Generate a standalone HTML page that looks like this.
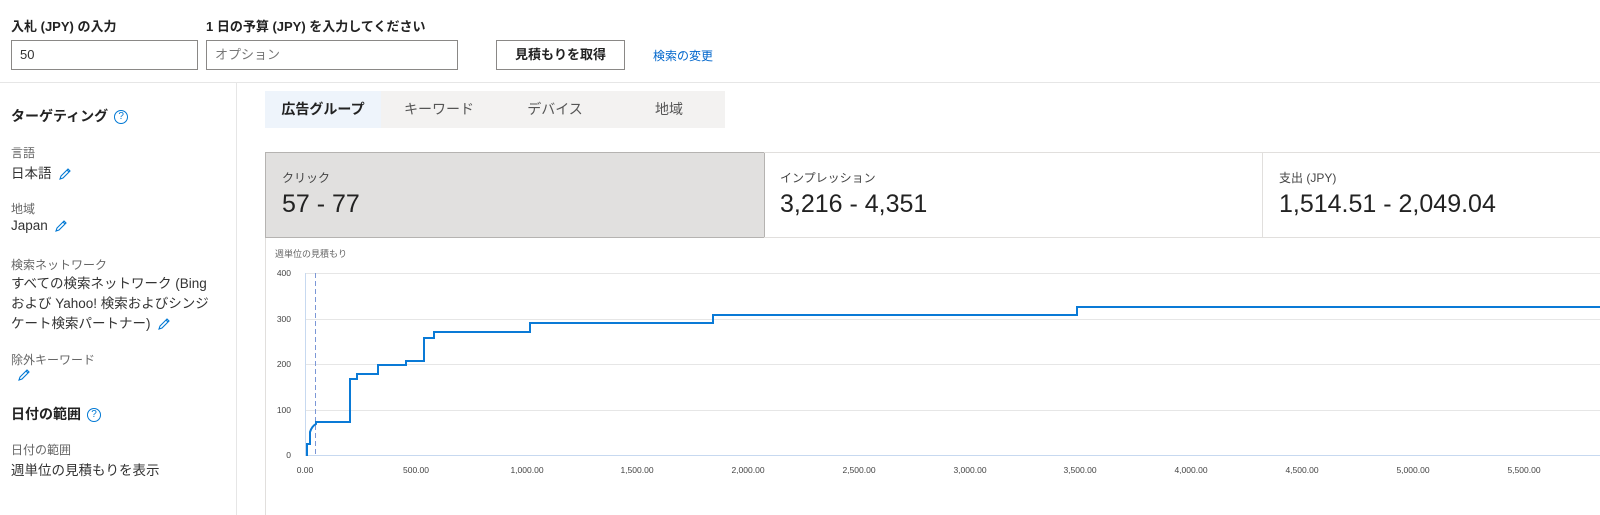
<!DOCTYPE html>
<html><head><meta charset="utf-8"><style>
*{margin:0;padding:0;box-sizing:border-box}
body{width:1600px;height:515px;overflow:hidden;background:#fff;font-family:"Liberation Sans","Noto Sans CJK JP",sans-serif;color:#222;position:relative}
.a{position:absolute;white-space:nowrap}
.lbl{font-size:13px;font-weight:bold;color:#222}
.inp{border:1px solid #8a8886;height:30px;font-size:13px;color:#333;padding:0 8px;line-height:28px;background:#fff}
.sm{font-size:12px;color:#666}
.val{font-size:13.5px;color:#333}
.pen{display:inline-block;vertical-align:middle;margin-left:6px}
.q{display:inline-block;width:14px;height:14px;border:1px solid #0078d4;border-radius:50%;color:#0078d4;font-size:10px;line-height:12px;text-align:center;vertical-align:middle;margin-left:6px;font-weight:normal}
.tab{position:absolute;top:91px;height:37px;background:#f3f2f1;font-size:14px;color:#555;text-align:center;line-height:37px}
.card{position:absolute;top:152px;height:86px;border:1px solid #e1dfdd;padding:16px 16px}
.card .t{font-size:12px;color:#444}
.card .n{font-size:25px;color:#222;margin-top:4px}
</style></head><body>
<div class="a lbl" style="left:11px;top:16px">入札 (JPY) の入力</div>
<div class="a lbl" style="left:206px;top:16px">1 日の予算 (JPY) を入力してください</div>
<div class="a inp" style="left:11px;top:40px;width:187px">50</div>
<div class="a inp" style="left:206px;top:40px;width:252px;color:#777">オプション</div>
<div class="a" style="left:496px;top:40px;width:129px;height:30px;border:1px solid #8a8886;font-size:13px;font-weight:bold;text-align:center;line-height:28px">見積もりを取得</div>
<div class="a" style="left:653px;top:47px;font-size:12px;color:#0066cc">検索の変更</div>
<div class="a" style="left:0;top:82px;width:1600px;height:1px;background:#e6e6e6"></div>
<div class="a" style="left:236px;top:83px;width:1px;height:432px;background:#e6e6e6"></div>

<div class="a" style="left:11px;top:106px;font-size:14px;font-weight:bold;color:#222">ターゲティング<span class="q">?</span></div>
<div class="a sm" style="left:11px;top:144px">言語</div>
<div class="a val" style="left:11px;top:162px">日本語<svg class="pen" width="14" height="14" viewBox="0 0 14 14"><path d="M2 12 L3 9 L10 2 L12 4 L5 11 Z M9 3 L11 5" fill="none" stroke="#0078d4" stroke-width="1.1"/></svg></div>
<div class="a sm" style="left:11px;top:200px">地域</div>
<div class="a val" style="left:11px;top:218px">Japan<svg class="pen" width="14" height="14" viewBox="0 0 14 14"><path d="M2 12 L3 9 L10 2 L12 4 L5 11 Z M9 3 L11 5" fill="none" stroke="#0078d4" stroke-width="1.1"/></svg></div>
<div class="a sm" style="left:11px;top:256px">検索ネットワーク</div>
<div class="a val" style="left:11px;top:274px;line-height:20px">すべての検索ネットワーク (Bing<br>および Yahoo! 検索およびシンジ<br>ケート検索パートナー)<svg class="pen" width="14" height="14" viewBox="0 0 14 14"><path d="M2 12 L3 9 L10 2 L12 4 L5 11 Z M9 3 L11 5" fill="none" stroke="#0078d4" stroke-width="1.1"/></svg></div>
<div class="a sm" style="left:11px;top:351px">除外キーワード</div>
<svg class="a" style="left:17px;top:368px" width="14" height="14" viewBox="0 0 14 14"><path d="M2 12 L3 9 L10 2 L12 4 L5 11 Z M9 3 L11 5" fill="none" stroke="#0078d4" stroke-width="1.1"/></svg>
<div class="a" style="left:11px;top:404px;font-size:14px;font-weight:bold">日付の範囲<span class="q">?</span></div>
<div class="a sm" style="left:11px;top:441px">日付の範囲</div>
<div class="a val" style="left:11px;top:459px">週単位の見積もりを表示</div>

<div class="tab" style="left:265px;width:116px;background:#eef4fb;color:#222;font-weight:bold">広告グループ</div>
<div class="tab" style="left:381px;width:116px">キーワード</div>
<div class="tab" style="left:497px;width:116px">デバイス</div>
<div class="tab" style="left:613px;width:112px">地域</div>

<div class="a" style="left:265px;top:152px;width:1px;height:363px;background:#e1dfdd"></div>
<div class="card" style="left:265px;width:500px;background:#e1e0df;border-color:#b5b3b1"><div class="t">クリック</div><div class="n">57 - 77</div></div>
<div class="card" style="left:764px;width:499px;border-left:none"><div class="t">インプレッション</div><div class="n">3,216 - 4,351</div></div>
<div class="card" style="left:1262px;width:340px"><div class="t">支出 (JPY)</div><div class="n">1,514.51 - 2,049.04</div></div>

<svg class="a" style="left:0;top:0" width="1600" height="515" viewBox="0 0 1600 515" font-family="Liberation Sans, Noto Sans CJK JP, sans-serif">
<text x="275" y="257" font-size="9" fill="#666">週単位の見積もり</text>
<g stroke="#e6e6e6" stroke-width="1">
<line x1="305" y1="273.5" x2="1600" y2="273.5"/><line x1="305" y1="319.5" x2="1600" y2="319.5"/><line x1="305" y1="364.5" x2="1600" y2="364.5"/><line x1="305" y1="410.5" x2="1600" y2="410.5"/>
</g>
<line x1="305" y1="455.5" x2="1600" y2="455.5" stroke="#c7d9f0"/>
<line x1="305.5" y1="273" x2="305.5" y2="456" stroke="#c7d9f0"/>
<g font-size="8.5" fill="#444" text-anchor="end">
<text x="291" y="276">400</text><text x="291" y="322">300</text><text x="291" y="367">200</text><text x="291" y="413">100</text><text x="291" y="458">0</text>
</g>
<g font-size="8.5" fill="#444" text-anchor="middle">
<text x="305" y="473">0.00</text><text x="416" y="473">500.00</text><text x="527" y="473">1,000.00</text><text x="637" y="473">1,500.00</text><text x="748" y="473">2,000.00</text><text x="859" y="473">2,500.00</text><text x="970" y="473">3,000.00</text><text x="1080" y="473">3,500.00</text><text x="1191" y="473">4,000.00</text><text x="1302" y="473">4,500.00</text><text x="1413" y="473">5,000.00</text><text x="1524" y="473">5,500.00</text>
</g>
<line x1="315.5" y1="273" x2="315.5" y2="455" stroke="#7b97d6" stroke-dasharray="5,3"/>
<path d="M306 455 L307 455 L307 444 L310 444 L310 432 Q312 426 316 424 L316 422 L350 422 L350 379 L357 379 L357 374 L378 374 L378 365 L406 365 L406 361 L424 361 L424 338 L434 338 L434 332 L530 332 L530 323 L713 323 L713 315 L1077 315 L1077 307 L1600 307" fill="none" stroke="#0a7ad6" stroke-width="2"/>
</svg>
</body></html>
